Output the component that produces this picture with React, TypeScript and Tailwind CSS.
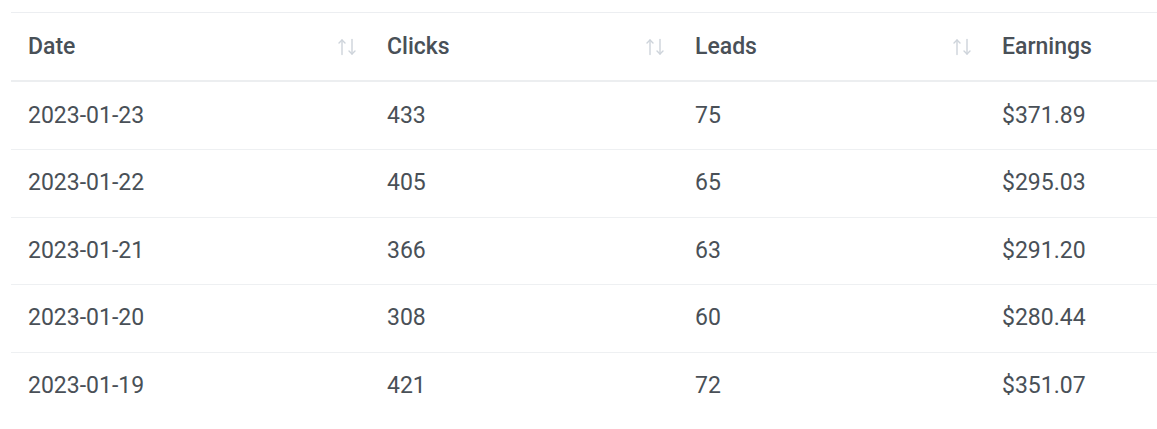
import React from "react";

const rows = [
  ["2023-01-23", "433", "75", "$371.89"],
  ["2023-01-22", "405", "65", "$295.03"],
  ["2023-01-21", "366", "63", "$291.20"],
  ["2023-01-20", "308", "60", "$280.44"],
  ["2023-01-19", "421", "72", "$351.07"],
];

function SortIcon() {
  return (
    <svg width="20" height="18" viewBox="0 0 20 18" fill="none" stroke="#cdd3da" strokeWidth="1.4" strokeLinecap="round" strokeLinejoin="round">
      <path d="M5 16.5V2" />
      <path d="M2 5L5 2L8 5" />
      <path d="M15 1.5V16" />
      <path d="M12 13L15 16L18 13" />
    </svg>
  );
}

function Th({ label, sortable }: { label: string; sortable: boolean }) {
  return (
    <th className="h-[68px] pl-[17px] pr-[13px] text-left align-middle font-medium">
      <div className="flex items-center justify-between pt-[1px]">
        <span>{label}</span>
        {sortable && <SortIcon />}
      </div>
    </th>
  );
}

export default function App() {
  return (
    <div className="min-h-[429px] w-full bg-white pt-[12px] pl-[11px]" style={{ fontFamily: "Roboto, 'Liberation Sans', sans-serif" }}>
      <table className="w-[1146px] table-fixed border-collapse text-[23px] text-[#495057]">
        <colgroup>
          <col className="w-[359px]" />
          <col className="w-[308px]" />
          <col className="w-[307px]" />
          <col />
        </colgroup>
        <thead>
          <tr className="border-t border-b-2 border-t-[#eceef1] border-b-[#eceef0]">
            <Th label="Date" sortable />
            <Th label="Clicks" sortable />
            <Th label="Leads" sortable />
            <Th label="Earnings" sortable={false} />
          </tr>
        </thead>
        <tbody>
          {rows.map((r, i) => (
            <tr key={i} className={i < rows.length - 1 ? "border-b border-[#eef0f2]" : ""}>
              {r.map((c, j) => (
                <td key={j} className={`${i === 0 ? "h-[69px] pt-[1px]" : "h-[67.5px]"} pl-[17px] align-middle`}>
                  {c}
                </td>
              ))}
            </tr>
          ))}
        </tbody>
      </table>
    </div>
  );
}
